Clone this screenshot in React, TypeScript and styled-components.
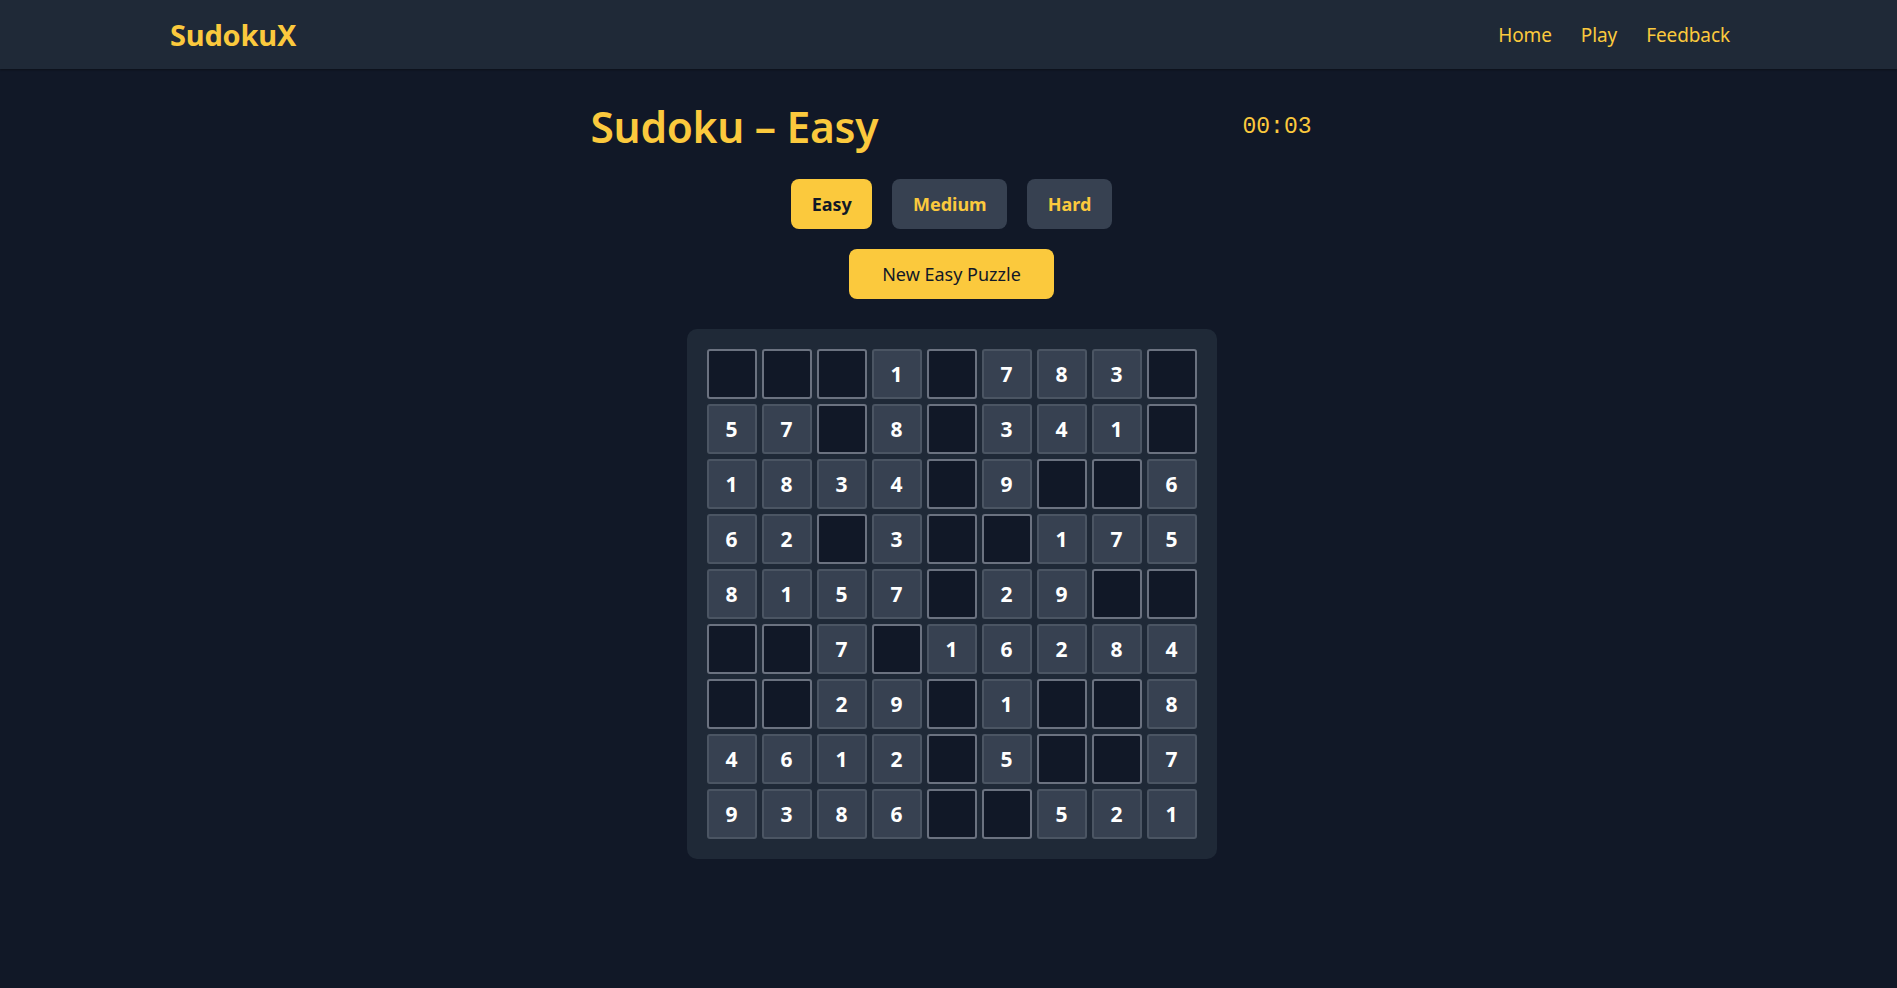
import React from "react";
import styled, { createGlobalStyle } from "styled-components";

const GlobalStyle = createGlobalStyle`
  html, body {
    margin: 0;
    padding: 0;
    background: #111827;
    font-family: "Noto Sans", "Open Sans", sans-serif;
    color: #ffffff;
  }
  * { box-sizing: border-box; }
`;

const YELLOW = "#fbc93d";

const Page = styled.div`
  min-height: 988px;
  background: #111827;
`;

const Header = styled.header`
  height: 69px;
  background: #1f2937;
  display: flex;
  align-items: center;
  justify-content: space-between;
  padding: 0 167px 0 170px;
  box-shadow: 0 1px 2px rgba(0, 0, 0, 0.35);
`;

const Logo = styled.div`
  color: ${YELLOW};
  font-size: 29px;
  font-weight: 700;
  letter-spacing: -0.2px;
`;

const Nav = styled.nav`
  display: flex;
  gap: 29px;
`;

const NavLink = styled.a`
  color: ${YELLOW};
  font-size: 19px;
  letter-spacing: -0.1px;
  text-decoration: none;
  cursor: pointer;
`;

const Main = styled.main`
  width: 768px;
  margin: 0 auto;
  padding: 31px 21px 0 27px;
  display: flex;
  flex-direction: column;
  align-items: center;
`;

const TitleRow = styled.div`
  width: 100%;
  display: flex;
  align-items: center;
  justify-content: space-between;
`;

const Title = styled.h1`
  margin: 0 0 0 -1px;
  color: ${YELLOW};
  font-size: 42.5px;
  font-weight: 600;
  line-height: 53px;
  letter-spacing: -0.3px;
`;

const Timer = styled.div`
  color: ${YELLOW};
  font-family: "Liberation Mono", "DejaVu Sans Mono", monospace;
  font-size: 23px;
  margin-top: 0;
`;

const Levels = styled.div`
  display: flex;
  gap: 20px;
  margin-top: 26px;
`;

const LevelButton = styled.button<{ $active?: boolean }>`
  height: 50px;
  padding: 0 20.5px;
  border: none;
  border-radius: 8px;
  font-family: inherit;
  font-size: 18px;
  font-weight: 700;
  cursor: pointer;
  background: ${(p) => (p.$active ? YELLOW : "#374151")};
  color: ${(p) => (p.$active ? "#111827" : YELLOW)};
`;

const NewButton = styled.button`
  margin-top: 20px;
  height: 50px;
  padding: 0 33px;
  border: none;
  border-radius: 8px;
  background: ${YELLOW};
  color: #111827;
  font-family: inherit;
  font-size: 18px;
  font-weight: 400;
  cursor: pointer;
`;

const Board = styled.div`
  margin-top: 30px;
  padding: 20px;
  background: #1f2937;
  border-radius: 10px;
  display: grid;
  grid-template-columns: repeat(9, 50px);
  grid-auto-rows: 50px;
  gap: 5px;
`;

const Cell = styled.div<{ $empty: boolean }>`
  border-radius: 3px;
  border: 2px solid ${(p) => (p.$empty ? "#6b7280" : "#4b5563")};
  background: ${(p) => (p.$empty ? "#111827" : "#374151")};
  display: flex;
  align-items: center;
  justify-content: center;
  color: #ffffff;
  font-size: 21px;
  font-weight: 700;
`;

const rows: string[] = [
  "000107830",
  "570803410",
  "183409006",
  "620300175",
  "815702900",
  "007016284",
  "002901008",
  "461205007",
  "938600521",
];

export default function App() {
  return (
    <Page>
      <GlobalStyle />
      <Header>
        <Logo>SudokuX</Logo>
        <Nav>
          <NavLink>Home</NavLink>
          <NavLink>Play</NavLink>
          <NavLink>Feedback</NavLink>
        </Nav>
      </Header>
      <Main>
        <TitleRow>
          <Title>Sudoku – Easy</Title>
          <Timer>00:03</Timer>
        </TitleRow>
        <Levels>
          <LevelButton $active>Easy</LevelButton>
          <LevelButton>Medium</LevelButton>
          <LevelButton>Hard</LevelButton>
        </Levels>
        <NewButton>New Easy Puzzle</NewButton>
        <Board>
          {rows.flatMap((row, r) =>
            row.split("").map((ch, c) => (
              <Cell key={`${r}-${c}`} $empty={ch === "0"}>
                {ch === "0" ? "" : ch}
              </Cell>
            ))
          )}
        </Board>
      </Main>
    </Page>
  );
}
